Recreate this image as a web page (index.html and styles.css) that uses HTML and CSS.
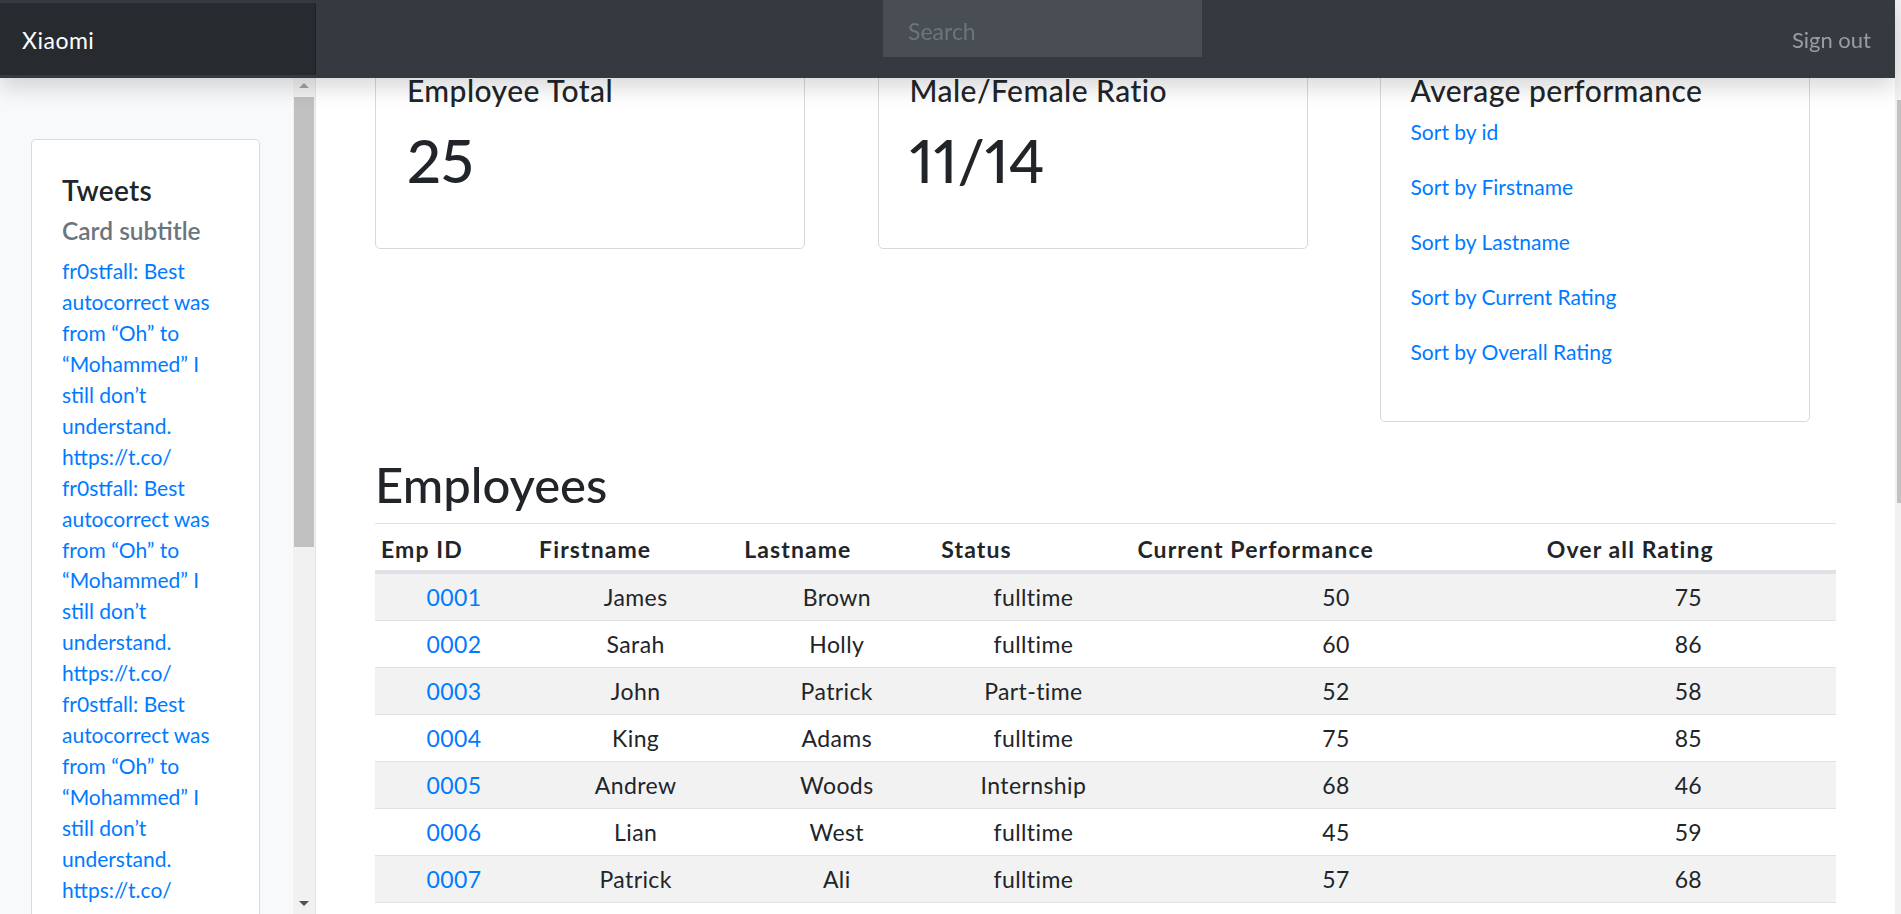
FILE: index.html
```html
<!DOCTYPE html>
<html lang="en">
<head>
<meta charset="utf-8">
<title>Xiaomi Dashboard</title>
<link rel="stylesheet" href="styles.css">
</head>
<body>
<nav class="topbar">
  <a class="brand" href="#">Xiaomi</a>
  <input class="search" type="text" placeholder="Search" aria-label="Search">
  <a class="signout" href="#">Sign out</a>
</nav>
<div class="layout">
  <aside class="sidebar">
    <div class="sidebar-body">
      <div class="sidebar-content">
        <div class="tweet-card">
          <h5 class="tweet-title">Tweets</h5>
          <h6 class="tweet-subtitle">Card subtitle</h6>
          <div class="tweet-list">
            <a class="tweet" href="#">fr0stfall: Best autocorrect was from “Oh” to “Mohammed” I still don’t understand. https://t.co/</a>
            <a class="tweet" href="#">fr0stfall: Best autocorrect was from “Oh” to “Mohammed” I still don’t understand. https://t.co/</a>
            <a class="tweet" href="#">fr0stfall: Best autocorrect was from “Oh” to “Mohammed” I still don’t understand. https://t.co/</a>
          </div>
        </div>
      </div>
      <div class="sb">
        <div class="sb-btn sb-btn-top"><span class="sb-up"></span></div>
        <div class="sb-thumb"></div>
        <div class="sb-fill"></div>
        <div class="sb-btn sb-btn-bottom"><span class="sb-down"></span></div>
      </div>
    </div>
  </aside>
  <main class="main">
    <div class="stats">
      <div class="stat-card">
        <h4 class="card-title">Employee Total</h4>
        <p class="stat-value">25</p>
      </div>
      <div class="stat-card">
        <h4 class="card-title">Male/Female Ratio</h4>
        <p class="stat-value">11/14</p>
      </div>
      <div class="stat-card stat-card-links">
        <h4 class="card-title card-title-tight">Average performance</h4>
        <a class="sort-link" href="#">Sort by id</a>
        <a class="sort-link" href="#">Sort by Firstname</a>
        <a class="sort-link" href="#">Sort by Lastname</a>
        <a class="sort-link" href="#">Sort by Current Rating</a>
        <a class="sort-link" href="#">Sort by Overall Rating</a>
      </div>
    </div>
    <h1 class="section-title">Employees</h1>
    <table class="emp-table">
      <colgroup>
        <col class="col-id"><col class="col-first"><col class="col-last"><col class="col-status"><col class="col-current"><col class="col-overall">
      </colgroup>
      <thead>
        <tr><th>Emp ID</th><th>Firstname</th><th>Lastname</th><th>Status</th><th>Current Performance</th><th>Over all Rating</th></tr>
      </thead>
      <tbody>
        <tr><td><a href="#">0001</a></td><td>James</td><td>Brown</td><td>fulltime</td><td>50</td><td>75</td></tr>
        <tr><td><a href="#">0002</a></td><td>Sarah</td><td>Holly</td><td>fulltime</td><td>60</td><td>86</td></tr>
        <tr><td><a href="#">0003</a></td><td>John</td><td>Patrick</td><td>Part-time</td><td>52</td><td>58</td></tr>
        <tr><td><a href="#">0004</a></td><td>King</td><td>Adams</td><td>fulltime</td><td>75</td><td>85</td></tr>
        <tr><td><a href="#">0005</a></td><td>Andrew</td><td>Woods</td><td>Internship</td><td>68</td><td>46</td></tr>
        <tr><td><a href="#">0006</a></td><td>Lian</td><td>West</td><td>fulltime</td><td>45</td><td>59</td></tr>
        <tr><td><a href="#">0007</a></td><td>Patrick</td><td>Ali</td><td>fulltime</td><td>57</td><td>68</td></tr>
      </tbody>
    </table>
  </main>
  <div class="page-scroll"><div class="page-thumb"></div></div>
</div>
</body>
</html>
```
FILE: styles.css
```css
html, body {
  margin: 0;
  height: 100%;
  overflow: hidden;
}

body {
  font-family: "Lato", "Noto Sans", sans-serif;
  color: #212529;
  background: #fff;
}

a {
  color: #007bff;
  text-decoration: none;
}

/* ---------- top navbar ---------- */
.topbar {
  position: fixed;
  top: 0;
  left: 0;
  right: 6px;
  height: 78px;
  display: flex;
  align-items: flex-start;
  background: #343a40;
  box-shadow: 0 10px 20px rgba(0, 0, 0, 0.15);
  z-index: 10;
}

.brand {
  box-sizing: border-box;
  flex: none;
  width: 316px;
  height: 72px;
  margin-top: 3px;
  padding: 24px 22px 0;
  font-size: 23px;
  letter-spacing: 0.5px;
  line-height: 1.2;
  color: #fff;
  background: #272b30;
  box-shadow: inset -1px 0 0 rgba(0, 0, 0, 0.25);
}

.search {
  box-sizing: border-box;
  flex: none;
  width: 319px;
  height: 57px;
  margin: 0 0 0 567px;
  padding: 4px 0 0 25px;
  border: 0;
  border-radius: 0;
  outline: none;
  background: #484e53;
  color: #fff;
  font-family: "Lato", "Noto Sans", sans-serif;
  font-size: 23px;
}

.search::placeholder {
  color: #6c757d;
}

.signout {
  margin-left: auto;
  padding: 27px 24px 0 0;
  font-size: 22px;
  line-height: 1.2;
  color: #9a9da0;
}

/* ---------- page layout ---------- */
.layout {
  display: flex;
  height: 100%;
}

.sidebar {
  box-sizing: border-box;
  flex: none;
  width: 316px;
  height: 100%;
  padding-top: 78px;
  display: flex;
  flex-direction: column;
  background: #f8f9fa;
  border-right: 1px solid #e4e5e6;
}

.sidebar-body {
  flex: 1;
  min-height: 0;
  display: flex;
}

.sidebar-content {
  flex: 1;
  min-width: 0;
  overflow: hidden;
  padding: 61px 0 0 31px;
}

.tweet-card {
  box-sizing: border-box;
  width: 229px;
  padding: 34.4px 30px 30px;
  background: #fff;
  border: 1px solid #d9d9d9;
  border-radius: 5px;
}

.tweet-title {
  margin: 0;
  font-size: 28px;
  font-weight: 600;
  letter-spacing: 0.3px;
  line-height: 1.2;
}

.tweet-subtitle {
  margin: 8px 0 0;
  font-size: 24.5px;
  font-weight: 600;
  line-height: 1.2;
  color: #6c757d;
}

.tweet-list {
  margin-top: 11px;
}

.tweet {
  display: block;
  font-size: 21px;
  line-height: 30.9px;
}

/* fake inner scrollbar of the sidebar */
.sb {
  flex: none;
  width: 22px;
  display: flex;
  flex-direction: column;
  background: #f1f1f1;
}

.sb-btn {
  flex: none;
  display: flex;
  align-items: center;
  justify-content: center;
}

.sb-btn-top {
  height: 15px;
  padding-bottom: 4px;
}

.sb-btn-bottom {
  height: 21px;
}

.sb-up {
  width: 0;
  height: 0;
  border-left: 5px solid transparent;
  border-right: 5px solid transparent;
  border-bottom: 5px solid #a3a3a3;
}

.sb-down {
  width: 0;
  height: 0;
  border-left: 5px solid transparent;
  border-right: 5px solid transparent;
  border-top: 5px solid #505050;
}

.sb-thumb {
  flex: none;
  height: 450px;
  margin: 0 1px;
  background: #c1c1c1;
}

.sb-fill {
  flex: 1;
}

/* ---------- main ---------- */
.main {
  box-sizing: border-box;
  flex: 1;
  min-width: 0;
  height: 100%;
  overflow: hidden;
  padding: 42px 59px 0;
}

.stats {
  display: flex;
  align-items: flex-start;
  gap: 72.5px;
}

.stat-card {
  box-sizing: border-box;
  flex: none;
  width: 430px;
  padding: 30px 30px 30px 31px;
  border: 1px solid #d9d9d9;
  border-radius: 5px;
  background: #fff;
}

.stat-card-links {
  padding-left: 29.5px;
}

.card-title {
  margin: 0 0 16px;
  font-size: 30px;
  font-weight: 500;
  letter-spacing: 0.45px;
  line-height: 35px;
}

.card-title-tight {
  margin-bottom: 8px;
}

.stat-value {
  margin: 0 0 22px;
  font-size: 60px;
  font-weight: 500;
  line-height: 72px;
  font-variant-numeric: proportional-nums;
}

.sort-link {
  display: block;
  font-size: 21px;
  line-height: 31.5px;
  margin-bottom: 23.5px;
}

.section-title {
  margin: 33px 0 9px;
  font-size: 49px;
  font-weight: 500;
  line-height: 1.2;
}

/* ---------- table ---------- */
.emp-table {
  width: 100%;
  table-layout: fixed;
  border-collapse: separate;
  border-spacing: 0;
  font-size: 23px;
  letter-spacing: 0.4px;
}

.col-id { width: 158px; }
.col-first { width: 205px; }
.col-last { width: 197px; }
.col-status { width: 196px; }
.col-current { width: 409px; }
.col-overall { width: 295px; }

.emp-table th {
  text-align: left;
  font-weight: 700;
  letter-spacing: 1.1px;
  padding: 8px 6px 4px;
  line-height: 34px;
  border-top: 1px solid #dee2e6;
  border-bottom: 3px solid #dee2e6;
}

.emp-table td {
  text-align: center;
  padding: 6px;
  line-height: 34px;
  border-top: 1px solid #dee2e6;
}

.emp-table tbody tr:nth-child(odd) td {
  background: #f2f2f2;
}

.emp-table tbody tr:last-child td {
  border-bottom: 1px solid #dee2e6;
}

/* fake page scrollbar, mostly cropped at the right edge */
.page-scroll {
  box-sizing: border-box;
  flex: none;
  width: 6px;
  height: 100%;
  padding-top: 100px;
  background: #f1f1f1;
}

.page-thumb {
  height: 403px;
  margin-left: 2px;
  background: #c1c1c1;
}
```
